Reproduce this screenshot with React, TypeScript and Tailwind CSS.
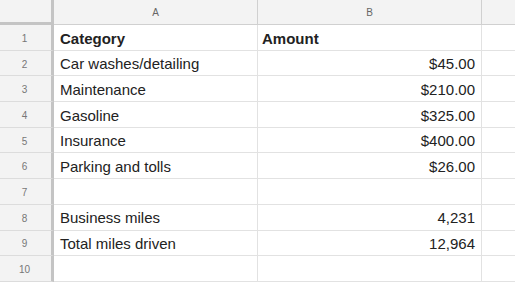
const rows: [string, string, boolean?][] = [
  ["Category", "Amount", true],
  ["Car washes/detailing", "$45.00"],
  ["Maintenance", "$210.00"],
  ["Gasoline", "$325.00"],
  ["Insurance", "$400.00"],
  ["Parking and tolls", "$26.00"],
  ["", ""],
  ["Business miles", "4,231"],
  ["Total miles driven", "12,964"],
  ["", ""],
];

export default function App() {
  return (
    <div className="w-[515px] h-[287px] overflow-hidden bg-white font-['Liberation_Sans',Arial,sans-serif] text-[#222]">
      {/* column headers */}
      <div className="flex h-[25px] bg-[#f3f3f3]">
        <div className="w-[54px] shrink-0 border-r-[3px] border-b-[3px] border-[#c4c4c4]" />
        <div className="w-[204px] shrink-0 flex items-center justify-center border-r border-b border-[#d0d0d0] text-[10px] text-[#666]">
          A
        </div>
        <div className="w-[224px] shrink-0 flex items-center justify-center border-r border-b border-[#d0d0d0] text-[10px] text-[#666]">
          B
        </div>
        <div className="flex-1 border-b border-[#d0d0d0]" />
      </div>

      {rows.map(([label, value, bold], i) => (
        <div key={i} className="flex h-[25.7px]">
          <div className="w-[54px] shrink-0 flex items-center justify-center bg-[#f3f3f3] border-r-[3px] border-b border-r-[#c4c4c4] border-b-[#dcdcdc] text-[10px] text-[#777] pr-[2px] pt-[2px]">
            {i + 1}
          </div>
          <div
            className={`w-[204px] shrink-0 flex items-center pl-[6px] pt-[3px] border-r border-b border-[#e2e2e2] text-[15px] ${bold ? "font-bold" : ""}`}
          >
            {label}
          </div>
          <div
            className={`w-[224px] shrink-0 flex items-center pt-[3px] border-r border-b border-[#e2e2e2] text-[15px] ${
              bold ? "font-bold justify-start pl-[4px]" : "justify-end pr-[6px]"
            }`}
          >
            {value}
          </div>
          <div className="flex-1 border-b border-[#e2e2e2]" />
        </div>
      ))}
    </div>
  );
}
